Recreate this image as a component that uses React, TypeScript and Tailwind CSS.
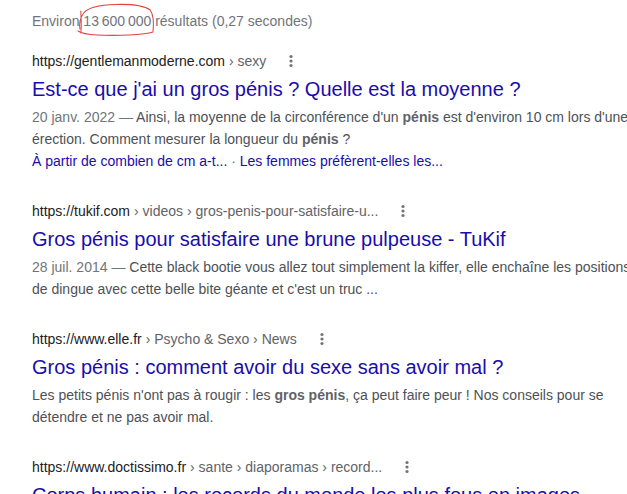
type Crumb = { base: string; path: string };

type Result = {
  url: Crumb;
  title: string;
  snippet: React.ReactNode;
  sitelinks?: string[];
};

function MoreIcon() {
  return (
    <svg width="4" height="14" viewBox="0 0 4 14" className="ml-[23px] shrink-0">
      <circle cx="2" cy="2.5" r="1.6" fill="#70757a" />
      <circle cx="2" cy="7" r="1.6" fill="#70757a" />
      <circle cx="2" cy="11.5" r="1.6" fill="#70757a" />
    </svg>
  );
}

const RESULTS: Result[] = [
  {
    url: { base: "https://gentlemanmoderne.com", path: "› sexy" },
    title: "Est-ce que j'ai un gros pénis ? Quelle est la moyenne ?",
    snippet: (
      <>
        <span className="text-[#70757a]">20 janv. 2022 — </span>
        Ainsi, la moyenne de la circonférence d'un <b className="text-[#5f6368]">pénis</b> est
        d'environ 10 cm lors d'une érection. Comment mesurer la longueur du{" "}
        <b className="text-[#5f6368]">pénis</b> ?
      </>
    ),
    sitelinks: ["À partir de combien de cm a-t...", "Les femmes préfèrent-elles les..."],
  },
  {
    url: { base: "https://tukif.com", path: "› videos › gros-penis-pour-satisfaire-u..." },
    title: "Gros pénis pour satisfaire une brune pulpeuse - TuKif",
    snippet: (
      <>
        <span className="text-[#70757a]">28 juil. 2014 — </span>
        Cette black bootie vous allez tout simplement la kiffer, elle enchaîne les positions de
        dingue avec cette belle bite géante et c'est un truc ...
      </>
    ),
  },
  {
    url: { base: "https://www.elle.fr", path: "› Psycho & Sexo › News" },
    title: "Gros pénis : comment avoir du sexe sans avoir mal ?",
    snippet: (
      <>
        Les petits pénis n'ont pas à rougir : les <b className="text-[#5f6368]">gros pénis</b>, ça
        peut faire peur ! Nos conseils pour se détendre et ne pas avoir mal.
      </>
    ),
  },
  {
    url: { base: "https://www.doctissimo.fr", path: "› sante › diaporamas › record..." },
    title: "Corps humain : les records du monde les plus fous en images",
    snippet: null,
  },
];

export default function App() {
  return (
    <div
      className="w-[627px] h-[494px] overflow-hidden bg-white"
      style={{ fontFamily: '"Liberation Sans", Arial, sans-serif' }}
    >
      <div className="w-[600px] ml-[32px] pt-[11px]">
        {/* Result stats */}
        <div className="text-[14px] leading-[20px] text-[#70757a] whitespace-nowrap">
          Environ{" "}
          <span className="relative inline-block">
            13{"\u202f"}600{"\u202f"}000
            <svg
              className="absolute -left-[5px] -top-[8px] w-[calc(100%+8px)] h-[34px] overflow-visible"
              viewBox="0 0 80 34"
              preserveAspectRatio="none"
              fill="none"
            >
              <path
                d="M2 26 C 1 20, 3 14, 6 10 C 10 5, 20 2, 40 1.5 C 58 1, 70 3, 76 7 C 79 11, 80 20, 79 29 C 70 32, 40 33, 20 32 C 10 31.5, 3 30, 0 28 M3 8 C 3 14, 4 22, 3 30"
                stroke="#e0423c"
                strokeWidth="1.1"
                strokeLinecap="round"
              />
            </svg>
          </span>{" "}
          résultats (0,27 secondes)
        </div>

        {/* Results */}
        <div className="flex flex-col gap-[29px] mt-[20px]">
          {RESULTS.map((r) => (
            <div key={r.url.base} className="flex flex-col">
              <div className="flex items-center h-[20px] text-[14px] leading-[20px] whitespace-nowrap">
                <span className="text-[#202124]">{r.url.base}</span>
                <span className="text-[#5f6368] ml-[4px]">{r.url.path}</span>
                <MoreIcon />
              </div>
              <h3 className="mt-[5px] text-[20px] leading-[26px] text-[#1a0dab] whitespace-nowrap">
                {r.title}
              </h3>
              {r.snippet && (
                <div className="mt-[4px] text-[14px] leading-[22px] text-[#4d5156]">{r.snippet}</div>
              )}
              {r.sitelinks && (
                <div className="text-[14px] leading-[22px] text-[#1a0dab] whitespace-nowrap">
                  {r.sitelinks[0]}
                  <span className="text-[#70757a]"> · </span>
                  {r.sitelinks[1]}
                </div>
              )}
            </div>
          ))}
        </div>
      </div>
    </div>
  );
}
